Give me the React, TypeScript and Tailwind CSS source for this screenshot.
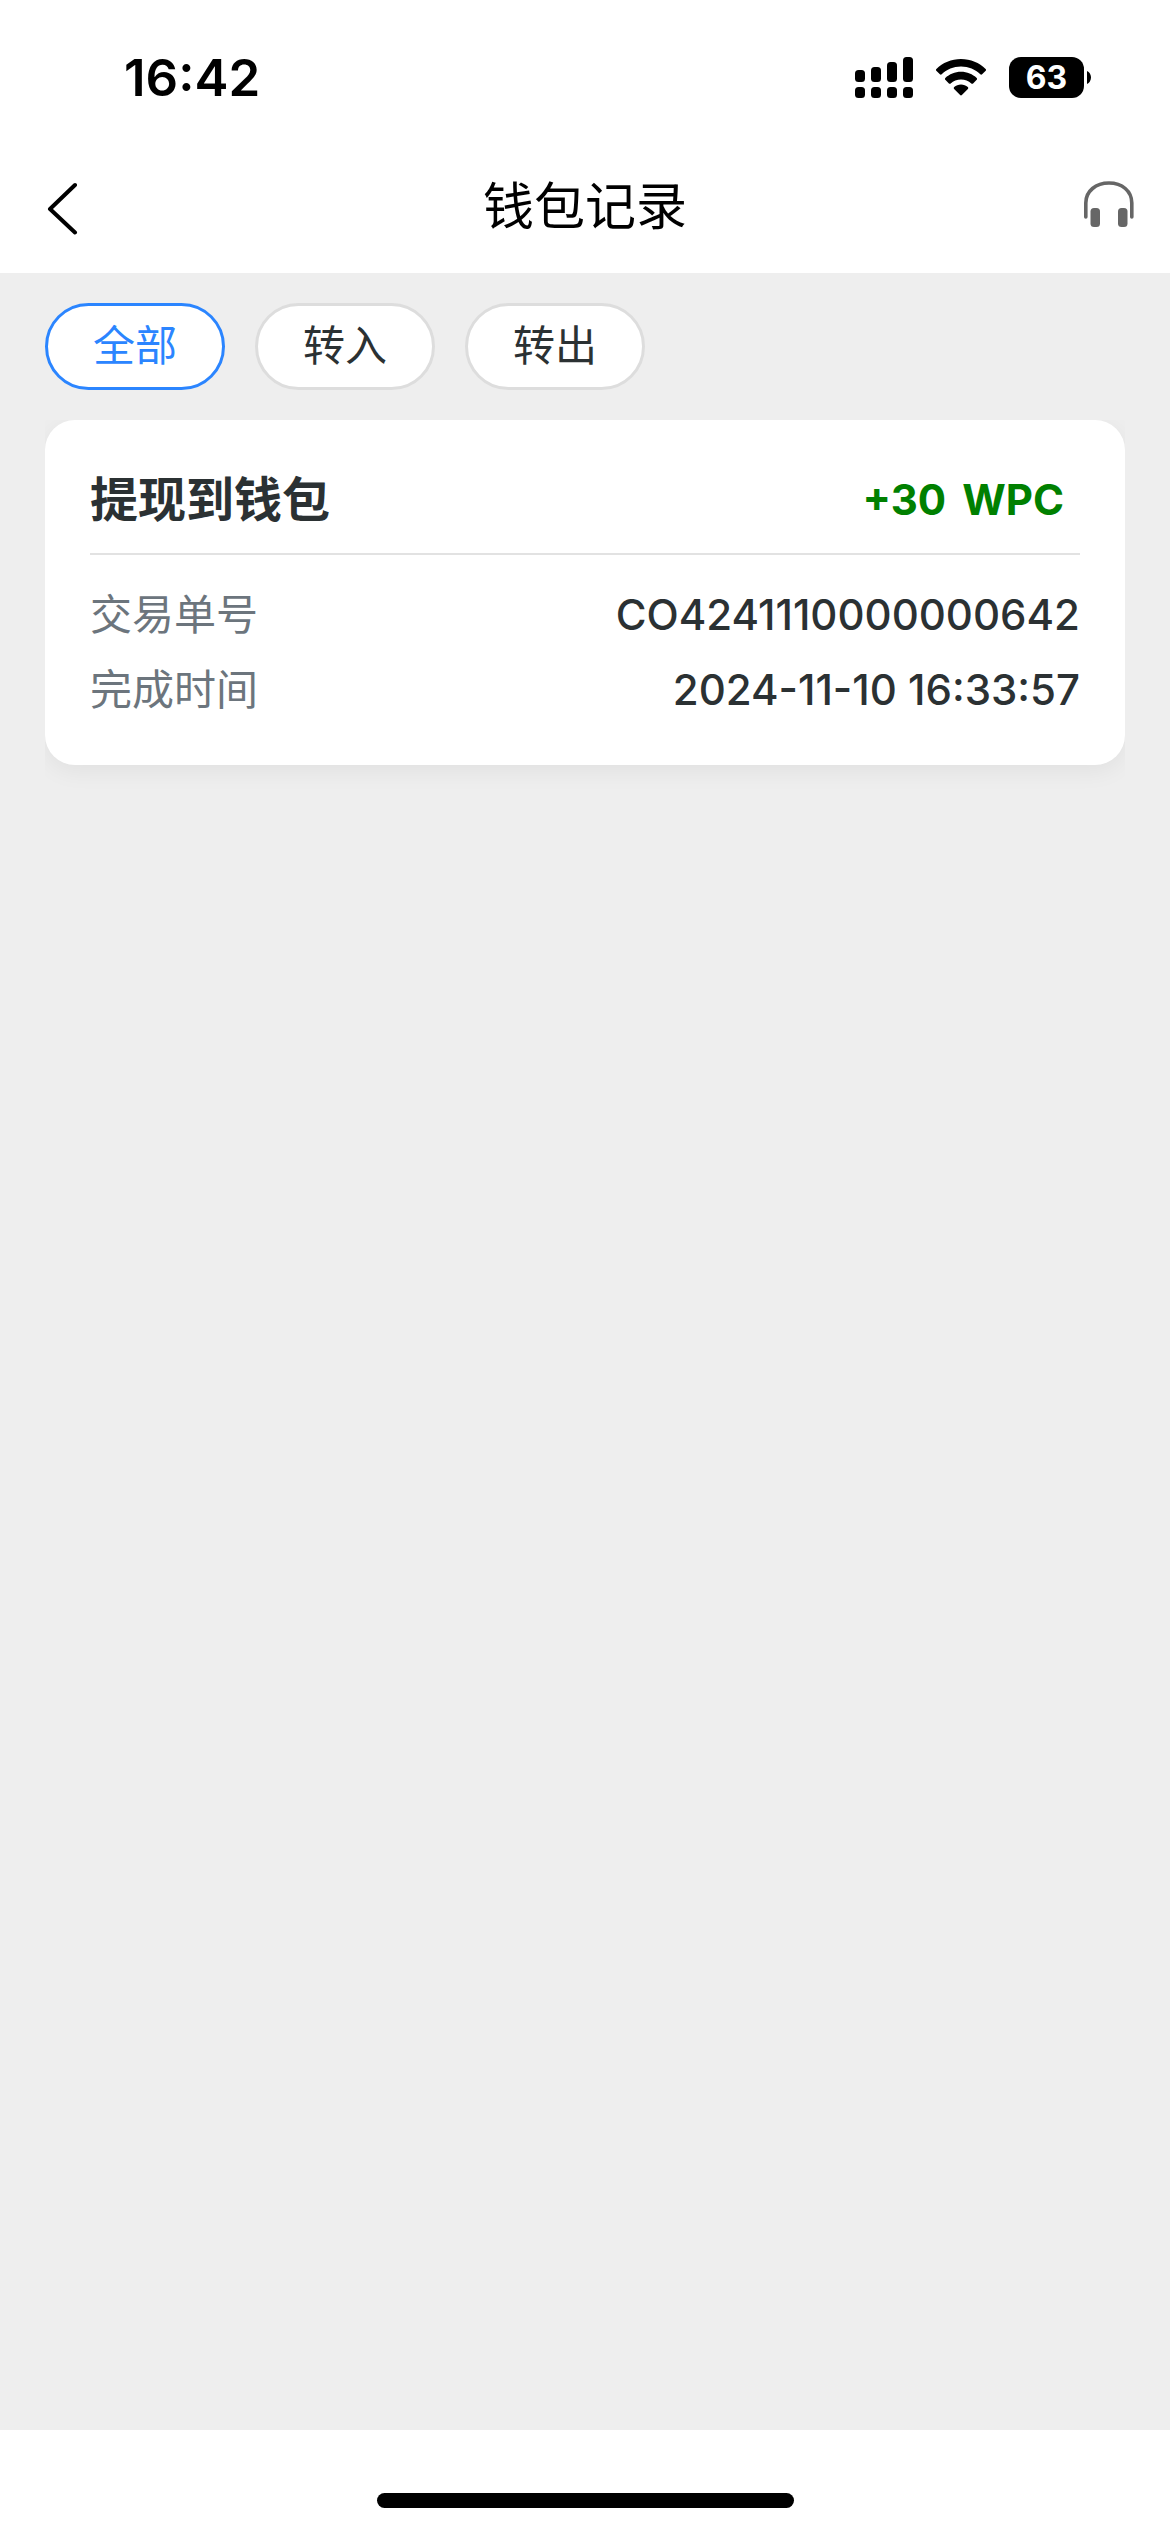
import React, { useState } from "react";

type Direction = "in" | "out";

interface WalletRecord {
  id: string;
  title: string;
  amount: number;
  currency: string;
  direction: Direction;
  finishedAt: string;
}

const FILTERS: { key: "all" | Direction; label: string }[] = [
  { key: "all", label: "全部" },
  { key: "in", label: "转入" },
  { key: "out", label: "转出" },
];

const RECORDS: WalletRecord[] = [
  {
    id: "CO4241110000000642",
    title: "提现到钱包",
    amount: 30,
    currency: "WPC",
    direction: "in",
    finishedAt: "2024-11-10 16:33:57",
  },
];

function SignalIcon() {
  return (
    <svg width="58" height="41" viewBox="0 0 58 41" aria-hidden>
      <rect x="0" y="13" width="10" height="12" rx="3.5" />
      <rect x="16" y="10" width="10" height="15" rx="3.5" />
      <rect x="32" y="5" width="10" height="20" rx="3.5" />
      <rect x="48" y="0" width="10" height="25" rx="3.5" />
      <rect x="0" y="30" width="10" height="11" rx="3.5" />
      <rect x="16" y="30" width="10" height="11" rx="3.5" />
      <rect x="32" y="30" width="10" height="11" rx="3.5" />
      <rect x="48" y="30" width="10" height="11" rx="3.5" />
    </svg>
  );
}

function WifiIcon() {
  return (
    <svg width="50" height="37" viewBox="0 0 50 37" aria-hidden>
      <path d="M25 0C34.6 0 43.4 3.8 49.6 9.9c.6.5.6 1.3.1 1.8l-3.6 3.6c-.5.5-1.3.5-1.8 0C39.4 10.5 32.5 7.6 25 7.6S10.6 10.5 5.7 15.3c-.5.5-1.3.5-1.8 0L.3 11.7c-.5-.5-.5-1.3.1-1.8C6.6 3.8 15.4 0 25 0Z" />
      <path d="M25 12.8c6.1 0 11.6 2.4 15.7 6.2.5.5.5 1.3 0 1.8l-3.6 3.6c-.5.5-1.3.5-1.8 0-2.7-2.500-6.300-4-10.300-4s-7.600 1.500-10.300 4c-.5.5-1.300.5-1.800 0l-3.600-3.600c-.5-.5-.5-1.300 0-1.800 4.100-3.800 9.600-6.200 15.700-6.200Z" />
      <path d="M25 25.6c2.600 0 5 .9 6.800 2.500.6.500.6 1.300.1 1.800l-6 6.200c-.5.500-1.300.5-1.800 0l-6-6.200c-.5-.5-.5-1.300.1-1.800 1.800-1.600 4.200-2.500 6.800-2.500Z" />
    </svg>
  );
}

function Battery({ level }: { level: number }) {
  return (
    <div className="flex items-center gap-[3px]">
      <span className="flex h-[41px] w-[75px] items-center justify-center rounded-[12px] bg-black text-[32px] leading-none font-bold text-white">
        {level}
      </span>
      <svg width="4" height="13" viewBox="0 0 4 13" aria-hidden>
        <path d="M0 0c2.400 1 4 3.600 4 6.500S2.400 12 0 13Z" />
      </svg>
    </div>
  );
}

function StatusBar() {
  return (
    <div className="flex h-[141px] items-center justify-between bg-white pt-[14px] pr-[79px] pl-[124px] text-black">
      <span className="text-[51px] leading-none font-semibold">16:42</span>
      <div className="flex items-center gap-[23px]">
        <SignalIcon />
        <WifiIcon />
        <Battery level={63} />
      </div>
    </div>
  );
}

function NavBar({ title }: { title: string }) {
  return (
    <header className="grid h-[132px] grid-cols-[1fr_auto_1fr] items-center bg-white px-9">
      <button type="button" aria-label="返回" className="justify-self-start">
        <svg width="54" height="56" viewBox="0 0 54 56" fill="none" aria-hidden>
          <path
            d="M39 6 14 30l25 23.500"
            stroke="#000"
            strokeWidth="4"
            strokeLinecap="round"
            strokeLinejoin="round"
          />
        </svg>
      </button>
      <h1 className="text-[51px] leading-[60px] font-normal text-black">{title}</h1>
      <button type="button" aria-label="客服" className="justify-self-end">
        <svg width="50" height="52" viewBox="0 0 50 52" fill="none" aria-hidden>
          <path
            d="M1.800 36V22C1.800 10 12 2 25 2s22.800 8 22.800 20v14"
            stroke="#666"
            strokeWidth="3.600"
            strokeLinecap="round"
          />
          <rect x="6.500" y="27" width="9.500" height="19" rx="3.500" fill="#666" />
          <rect x="34" y="27" width="9.500" height="19" rx="3.500" fill="#666" />
        </svg>
      </button>
    </header>
  );
}

function RecordCard({ record }: { record: WalletRecord }) {
  const sign = record.direction === "in" ? "+" : "-";
  return (
    <article className="rounded-[30px] bg-white px-[45px] pb-[38px] shadow-[0_6px_24px_rgba(0,0,0,0.06)]">
      <div className="flex h-[135px] items-center justify-between border-b-2 border-[#e2e2e2] pt-[26px] pr-4">
        <h2 className="text-[48px] leading-[60px] font-bold">{record.title}</h2>
        <p className="flex gap-4 text-[42px] leading-[60px] font-bold text-[#008000]">
          <span>
            {sign}
            {record.amount}
          </span>
          <span>{record.currency}</span>
        </p>
      </div>
      <dl className="pt-[22px] text-[42px] leading-[75px]">
        <div className="flex justify-between">
          <dt className="text-[#6c757d]">交易单号</dt>
          <dd className="font-medium">{record.id}</dd>
        </div>
        <div className="flex justify-between">
          <dt className="text-[#6c757d]">完成时间</dt>
          <dd className="font-medium">{record.finishedAt}</dd>
        </div>
      </dl>
    </article>
  );
}

export default function App() {
  const [filter, setFilter] = useState<"all" | Direction>("all");
  const records = RECORDS.filter((r) => filter === "all" || r.direction === filter);

  return (
    <div className="flex min-h-screen flex-col bg-[#eeeeee] font-[Inter,'Noto_Sans_CJK_SC',sans-serif] text-[#2b3133]">
      <StatusBar />
      <NavBar title="钱包记录" />

      <main className="flex-1 px-[45px] pt-[30px]">
        <div className="flex gap-[30px]">
          {FILTERS.map(({ key, label }) => (
            <button
              key={key}
              type="button"
              aria-pressed={filter === key}
              onClick={() => setFilter(key)}
              className={`h-[87px] w-[180px] rounded-full border-3 bg-white pb-[2px] text-[42px] leading-none ${
                filter === key ? "border-[#2b85ff] text-[#2b85ff]" : "border-[#dddddd]"
              }`}
            >
              {label}
            </button>
          ))}
        </div>

        <div className="mt-[30px] flex flex-col gap-[30px] overflow-hidden pb-[30px]">
          {records.map((r) => (
            <RecordCard key={r.id} record={r} />
          ))}
        </div>
      </main>

      <footer className="flex h-[102px] items-end justify-center bg-white pb-6">
        <div className="h-[15px] w-[417px] rounded-full bg-black" />
      </footer>
    </div>
  );
}
